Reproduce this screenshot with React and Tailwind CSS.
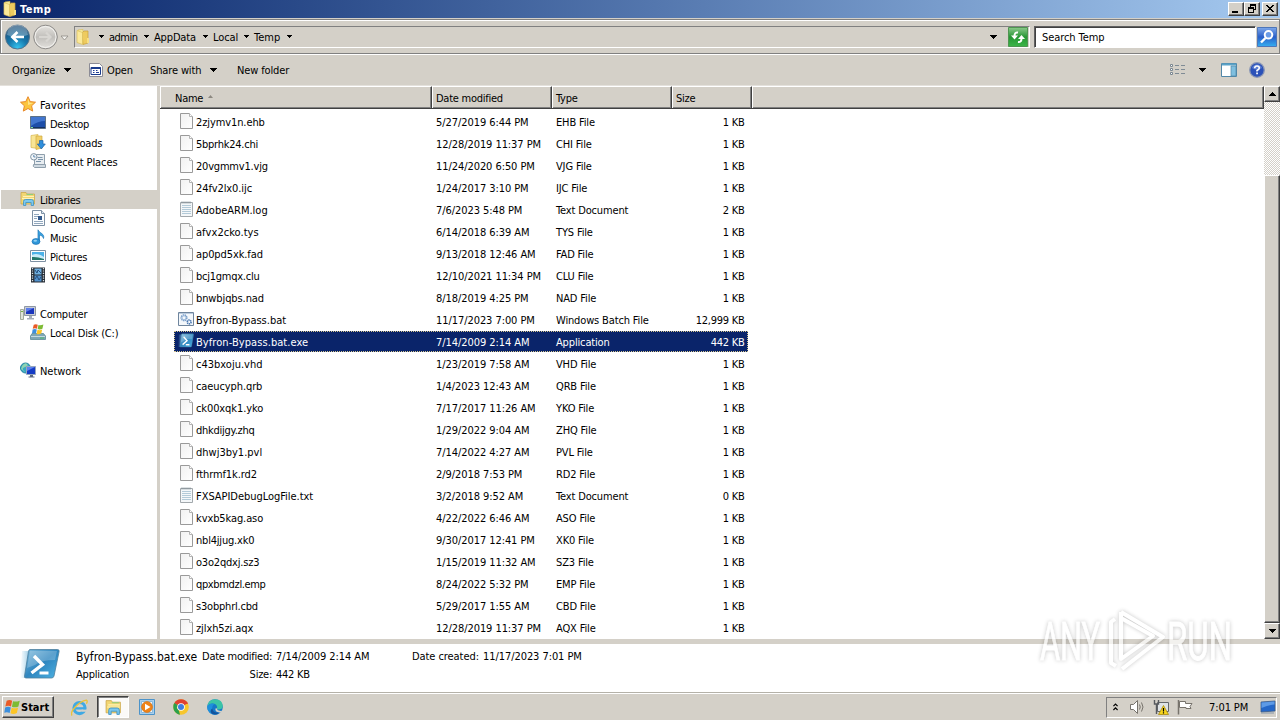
import React from "react";

const files = [
  ["2zjymv1n.ehb", "5/27/2019 6:44 PM", "EHB File", "1 KB"],
  ["5bprhk24.chi", "12/28/2019 11:37 PM", "CHI File", "1 KB"],
  ["20vgmmv1.vjg", "11/24/2020 6:50 PM", "VJG File", "1 KB"],
  ["24fv2lx0.ijc", "1/24/2017 3:10 PM", "IJC File", "1 KB"],
  ["AdobeARM.log", "7/6/2023 5:48 PM", "Text Document", "2 KB", "text"],
  ["afvx2cko.tys", "6/14/2018 6:39 AM", "TYS File", "1 KB"],
  ["ap0pd5xk.fad", "9/13/2018 12:46 AM", "FAD File", "1 KB"],
  ["bcj1gmqx.clu", "12/10/2021 11:34 PM", "CLU File", "1 KB"],
  ["bnwbjqbs.nad", "8/18/2019 4:25 PM", "NAD File", "1 KB"],
  ["Byfron-Bypass.bat", "11/17/2023 7:00 PM", "Windows Batch File", "12,999 KB", "batch"],
  ["Byfron-Bypass.bat.exe", "7/14/2009 2:14 AM", "Application", "442 KB", "shell"],
  ["c43bxoju.vhd", "1/23/2019 7:58 AM", "VHD File", "1 KB"],
  ["caeucyph.qrb", "1/4/2023 12:43 AM", "QRB File", "1 KB"],
  ["ck00xqk1.yko", "7/17/2017 11:26 AM", "YKO File", "1 KB"],
  ["dhkdijgy.zhq", "1/29/2022 9:04 AM", "ZHQ File", "1 KB"],
  ["dhwj3by1.pvl", "7/14/2022 4:27 AM", "PVL File", "1 KB"],
  ["fthrmf1k.rd2", "2/9/2018 7:53 PM", "RD2 File", "1 KB"],
  ["FXSAPIDebugLogFile.txt", "3/2/2018 9:52 AM", "Text Document", "0 KB", "text"],
  ["kvxb5kag.aso", "4/22/2022 6:46 AM", "ASO File", "1 KB"],
  ["nbl4jjug.xk0", "9/30/2017 12:41 PM", "XK0 File", "1 KB"],
  ["o3o2qdxj.sz3", "1/15/2019 11:32 AM", "SZ3 File", "1 KB"],
  ["qpxbmdzl.emp", "8/24/2022 5:32 PM", "EMP File", "1 KB"],
  ["s3obphrl.cbd", "5/29/2017 1:55 AM", "CBD File", "1 KB"],
  ["zjlxh5zi.aqx", "12/28/2019 11:37 PM", "AQX File", "1 KB"],
];

const tracking = {
  "5bprhk24.chi": "tracking-[-0.25px]",
  "20vgmmv1.vjg": "tracking-[-0.2px]",
  "AdobeARM.log": "tracking-[0px]",
  "afvx2cko.tys": "tracking-[0.04px]",
  "bcj1gmqx.clu": "tracking-[-0.25px]",
  "Byfron-Bypass.bat": "tracking-[0px]",
  "Byfron-Bypass.bat.exe": "tracking-[0.07px]",
  "c43bxoju.vhd": "tracking-[0px]",
  "dhkdijgy.zhq": "tracking-[-0.25px]",
  "dhwj3by1.pvl": "tracking-[0px]",
  "FXSAPIDebugLogFile.txt": "tracking-[-0.04px]",
  "nbl4jjug.xk0": "tracking-[-0.2px]",
  "o3o2qdxj.sz3": "tracking-[-0.2px]",
  "qpxbmdzl.emp": "tracking-[-0.35px]",
  "s3obphrl.cbd": "tracking-[-0.2px]",
};

const Svg = ({ children, className = "size-4", box = "0 0 16 16" }) => (
  <svg viewBox={box} className={`shrink-0 ${className}`} fill="none">
    {children}
  </svg>
);

const Down = ({ className = "" }) => (
  <svg viewBox="0 0 7 4" className={`h-1 w-[7px] shrink-0 ${className}`} shapeRendering="crispEdges">
    <path d="M0 0h7v1H0zM1 1h5v1H1zM2 2h3v1H2zM3 3h1v1H3z" fill="#000" />
  </svg>
);
const SmallDown = () => (
  <svg viewBox="0 0 5 3" className="h-[3px] w-[5px] shrink-0" shapeRendering="crispEdges">
    <path d="M0 0h5v1H0zM1 1h3v1H1zM2 2h1v1H2z" fill="#000" />
  </svg>
);

const Page = () => (
  <Svg>
    <defs>
      <linearGradient id="pg" x1="0" y1="0" x2="1" y2="1">
        <stop offset="0" stopColor="#f1f1f1" />
        <stop offset="1" stopColor="#fff" />
      </linearGradient>
    </defs>
    <path d="M2.500 .5h9l3 3v12h-12z" fill="url(#pg)" stroke="#9a9a9a" />
    <path d="M11.500 .5v3h3" fill="#fff" stroke="#b4b4b4" />
  </Svg>
);
const TextPage = () => (
  <Svg>
    <path d="M2.500 1.500h12v14h-12z" fill="#f4f7f9" stroke="#a2a8ac" />
    <path d="M3.500 1.500h10" stroke="#7e8a92" strokeDasharray="1 1" strokeWidth="2" />
    <path d="M4 4.500h9M4 6.500h9M4 8.500h9M4 10.500h9M4 12.500h9" stroke="#b3cad8" />
  </Svg>
);
const Batch = () => (
  <Svg>
    <path d="M.5 1.500h15v13H.5z" fill="#f3f7fb" stroke="#6f859d" />
    <path d="M1 2.500h14" stroke="#b9cadd" />
    <circle cx="6" cy="6.800" r="2.900" stroke="#6f97c6" strokeWidth="1.300" strokeDasharray="1.4 .6" />
    <circle cx="6" cy="6.800" r="2" stroke="#86a9d0" strokeWidth=".8" />
    <circle cx="11.200" cy="11" r="1.900" stroke="#4a77b1" strokeWidth="1.600" strokeDasharray="1.300 .5" />
  </Svg>
);
const Shell = ({ className = "size-4", box = "0 0 40 32" }) => (
  <svg viewBox={box} preserveAspectRatio="none" className={`shrink-0 ${className}`} fill="none">
    <defs>
      <linearGradient id="sh" x1="0" y1="0" x2="1" y2="1">
        <stop offset="0" stopColor="#7fbbdc" />
        <stop offset=".5" stopColor="#2f86bf" />
        <stop offset="1" stopColor="#4fb4e4" />
      </linearGradient>
      <linearGradient id="shf" x1="0" x2="1">
        <stop offset="0" stopColor="#8cc8e6" stopOpacity="0" />
        <stop offset="1" stopColor="#5da9d4" />
      </linearGradient>
    </defs>
    <path d="M2 3h12L8 30H0z" fill="url(#shf)" />
    <path d="M10 1.500h27.500q2 0 1.600 2L34 28q-.5 2-2.500 2H6q-2 0-1.500-2L8.500 3.500q.3-2 1.500-2z" fill="url(#sh)" stroke="#4d7f9d" strokeOpacity=".8" />
    <path d="M10 3h27l-2 9q-14 0-20 5l-8 3z" fill="#fff" opacity=".22" />
    <path d="M14 8l8.500 8.500L11.500 25" stroke="#fff" strokeWidth="3.400" />
    <path d="M19.500 25h9" stroke="#fff" strokeWidth="3" />
  </svg>
);
const Folder = ({ className }) => (
  <Svg className={className}>
    <path d="M3 1l5-.5v14L3 13z" fill="#f8eda2" stroke="#d9bd55" strokeWidth=".7" />
    <path d="M7 4l2-2h4v12l-5 1.500z" fill="#eecb5f" stroke="#c9a23b" strokeWidth=".7" />
    <path d="M2 1.500L7.500 3.500v12L2 13.500z" fill="#fbe99a" stroke="#dcc05c" strokeWidth=".7" />
    <path d="M12 9h2v5h-2z" fill="#f7df85" />
  </Svg>
);
const Star = () => (
  <Svg>
    <path d="M8 .7l2.200 4.900 5.300.6-3.900 3.600 1.100 5.300L8 12.500l-4.700 2.600 1.100-5.300L.5 6.200l5.300-.6z" fill="#fbc53f" stroke="#e8892a" />
    <path d="M8 2.700l1.500 4 4 .3L8 9z" fill="#ffe48a" />
  </Svg>
);
const Desktop = () => (
  <Svg>
    <path d="M.5 1.500h15v12H.5z" fill="#1d4ea9" stroke="#5d7186" />
    <path d="M1 2h14v4Q8 6 1 11z" fill="#4276cf" />
    <path d="M1 12.500h14" stroke="#16305f" />
    <path d="M1 12.500h2" stroke="#7fe0a0" />
  </Svg>
);
const Downloads = () => (
  <Svg>
    <path d="M1 1.500l7-1v14l-7-1z" fill="#f8e595" stroke="#d6b64f" strokeWidth=".7" />
    <path d="M6 2h6v12l-6 1.500z" fill="#f1d069" stroke="#cfa93f" strokeWidth=".7" />
    <path d="M9.500 6.500h3.500V10h2.300l-4 5-4-5h2.200z" fill="#2f8fdc" stroke="#1c63a8" strokeWidth=".7" />
  </Svg>
);
const Recent = () => (
  <Svg>
    <path d="M4.500 1.500h10v10h-10z" fill="#e8edf1" stroke="#8f9fac" />
    <path d="M3.500 11.500h12v3h-11q-2-1-1-3z" fill="#cfd9e1" stroke="#8f9fac" />
    <path d="M7.500 4.500h5M8 6.500h5M6 8.500h5" stroke="#7c95ab" />
    <circle cx="3.800" cy="3.800" r="3.200" fill="#f4f8fb" stroke="#8295a5" />
    <path d="M3.800 2v2h1.700" stroke="#3e6d9c" strokeWidth=".8" />
  </Svg>
);
const Libraries = ({ className }) => (
  <Svg className={className}>
    <path d="M1 1.500h5l1 1.500h7.500v10H1z" fill="#f2d673" stroke="#c9a344" strokeWidth=".7" />
    <path d="M3 5.500h11M2 7.500h12" stroke="#fff3b5" />
    <path d="M6 3h7v1H7z" fill="#8bcf7c" />
    <path d="M3.500 14.500v-4q0-2 2-2h6q2 0 2 2v4h-2.300v-3H5.800v3z" fill="#7cc8ef" stroke="#3b91c4" strokeWidth=".8" />
  </Svg>
);
const Documents = () => (
  <Svg>
    <path d="M2.500 .5h9l3 3v12h-12z" fill="#fbfdff" stroke="#7d90a4" />
    <path d="M11.500 .5v3h3" fill="#dce8f3" stroke="#7d90a4" />
    <path d="M4 4.500h5M4 6.500h4M4 8.500h3M4 11.500h9M4 13.500h9" stroke="#91a7bd" />
    <path d="M8 6h4v4H8z" fill="#31588c" />
  </Svg>
);
const Music = () => (
  <Svg>
    <path d="M8 12V.8C9.500 4.500 15 4.500 13.500 9.500 13 7 11 6.500 9.500 6v6.500z" fill="#3ba2df" stroke="#1f78b9" strokeWidth=".7" />
    <ellipse cx="6" cy="12.500" rx="4" ry="2.900" fill="#2f97da" stroke="#1c72b3" strokeWidth=".7" />
    <ellipse cx="5.300" cy="11.700" rx="1.800" ry="1" fill="#8fd0f4" />
  </Svg>
);
const Pictures = () => (
  <Svg>
    <path d="M.5 2.500h15v11H.5z" fill="#fff" stroke="#7e91a3" />
    <path d="M2 4h12v8H2z" fill="#4db2e8" />
    <path d="M2 7q5-3 12 2v3H2z" fill="#c9ebf8" />
    <path d="M2 9q5-.5 12 2v1H2z" fill="#25786b" />
  </Svg>
);
const Videos = () => (
  <Svg>
    <path d="M1 .5h14v15H1z" fill="#262d35" />
    <path d="M2.500 1v14M13.500 1v14" stroke="#d5dde4" strokeWidth="1.300" strokeDasharray="1.200 1.200" />
    <path d="M4.500 1.500h7v6h-7z" fill="#6fb0e0" />
    <path d="M4.500 8.500h7v6h-7z" fill="#4f90cc" />
    <path d="M5 3l2 3 1-3 3 3M5 12l2-3 2 4 2-3" stroke="#274f7d" />
  </Svg>
);
const Computer = () => (
  <Svg>
    <path d="M.5 4.500h3v10h-3z" fill="#dfe3da" stroke="#a3ab9c" />
    <path d="M1 6.500h2" stroke="#78b04b" />
    <path d="M4.500 1.500h11v9h-11z" fill="#c7ccd6" stroke="#8e97a4" />
    <path d="M6 3h8v6H6z" fill="#1a35bd" />
    <path d="M6 3h8L6 7z" fill="#5c7ceb" />
    <path d="M9 11h3v2h2v1.500H7V13h2z" fill="#a5aebb" />
  </Svg>
);
const Flag = ({ x = 0, y = 0, s = 1 }) => (
  <g transform={`translate(${x} ${y}) scale(${s})`}>
    <path d="M2.300 1.600Q5 .2 7.600 1.500L6.500 7Q4 5.800 1 7z" fill="#ea5b27" />
    <path d="M8.500 1.900Q11 3 15 1.400L13.700 7Q10.500 8.500 7.400 7.300z" fill="#7dbb34" />
    <path d="M.8 8Q3.800 6.800 6.300 8L5.200 13.400Q2.500 12 0 13.200z" fill="#3c8fdd" />
    <path d="M7.200 8.300Q10.300 9.500 13.400 8L12.200 13.300Q9 15 6 13.700z" fill="#fcc526" />
  </g>
);
const Disk = () => (
  <Svg>
    <path d="M2 9.500h11.500l2 2.500v3.500H.5V12z" fill="#7fa6b4" stroke="#5d8a98" strokeWidth=".8" />
    <path d="M1 12.500h14" stroke="#c4dae2" />
    <path d="M10 14h4" stroke="#4fb96b" />
    <Flag x={2} y={-0.5} s={0.76} />
  </Svg>
);
const Network = () => (
  <Svg>
    <circle cx="5.500" cy="6" r="5" fill="#36a7c2" stroke="#2583a0" />
    <path d="M2 4q3-4 5-2t-2 3-1 4-3-2z" fill="#8ed3b0" />
    <path d="M6.500 4.500h9v8h-9z" fill="#153bc5" stroke="#97a5bc" />
    <path d="M7 5h8l-8 4z" fill="#5b80ed" />
    <path d="M10 13h3v1.500h1.500v1h-6v-1H10z" fill="#5d6a80" />
  </Svg>
);

const sidebar = [
  [0, "Favorites", Star, "tracking-[0.12px]"],
  [1, "Desktop", Desktop],
  [1, "Downloads", Downloads],
  [1, "Recent Places", Recent, "tracking-[-0.1px]"],
  null,
  [0, "Libraries", Libraries],
  [1, "Documents", Documents],
  [1, "Music", Music],
  [1, "Pictures", Pictures],
  [1, "Videos", Videos],
  null,
  [0, "Computer", Computer],
  [1, "Local Disk (C:)", Disk, "tracking-[-0.18px]"],
  null,
  [0, "Network", Network, "tracking-[-0.05px]"],
];

const raised =
  "border border-t-white border-l-white border-r-[#404040] border-b-[#404040] bg-[#d4d0c8] shadow-[inset_-1px_-1px_0_#808080]";

const WinButton = ({ children }) => (
  <div className={`flex h-[14px] w-4 items-center justify-center ${raised}`}>
    <svg viewBox="0 0 12 10" className="h-[10px] w-3 shrink-0" fill="none" shapeRendering="crispEdges">
      {children}
    </svg>
  </div>
);

const Crumb = ({ children, className }) => (
  <div className={`flex shrink-0 items-center justify-between ${className}`}>
    <span>{children}</span>
    <SmallDown />
  </div>
);

function TitleBar() {
  return (
    <div className="flex h-[18px] shrink-0 items-center bg-linear-to-r from-[#0a246a] to-[#a6caf0] pl-[2px] pr-[2px]">
      <Folder className="size-4" />
      <span className="ml-[2px] flex-1 text-[11px] font-bold tracking-[0.5px] text-white">Temp</span>
      <WinButton>
        <path d="M2 7h6v2H2z" fill="#000" />
      </WinButton>
      <WinButton>
        <path d="M4 0h6v6H8V5h1V2H5v1H4z" fill="#000" />
        <path d="M2 3h6v6H2zM3 5v3h4V5z" fill="#000" fillRule="evenodd" />
      </WinButton>
      <div className="w-[2px]" />
      <WinButton>
        <path d="M2 1h2v1h1v1h2V2h1V1h2v1H9v1H8v1H7v1h1v1h1v1h1v1H8V7H7V6H5v1H4v1H2V7h1V6h1V5h1V4H4V3H3V2H2z" fill="#000" />
      </WinButton>
    </div>
  );
}

function AddressBar() {
  return (
    <div className="flex h-[37px] shrink-0 flex-col border-b border-white pt-px">
      <div className="flex h-[35px] items-center border border-[#808080] shadow-[inset_1px_1px_0_#fff] pl-[3px] pr-[2px]">
        <svg viewBox="0 0 66 26" className="h-[26px] w-[66px] shrink-0" fill="none">
          <defs>
            <radialGradient id="bk" cx=".5" cy=".95" r=".9">
              <stop offset="0" stopColor="#35c4f0" />
              <stop offset=".45" stopColor="#1778ac" />
              <stop offset="1" stopColor="#1c4e78" />
            </radialGradient>
            <linearGradient id="fw" x2="0" y2="1">
              <stop offset="0" stopColor="#e6e4e0" />
              <stop offset=".5" stopColor="#c1bfbb" />
              <stop offset="1" stopColor="#e3e1dd" />
            </linearGradient>
          </defs>
          <circle cx="13.500" cy="13" r="12" fill="url(#bk)" stroke="#56748c" />
          <path d="M3 11A10.500 10.500 0 0 1 24 11Q13 15 3 11z" fill="#fff" opacity=".3" />
          <path d="M20 13H9M13.500 8l-5.200 5 5.200 5" stroke="#fff" strokeWidth="2.600" />
          <circle cx="41.500" cy="13" r="11.800" fill="url(#fw)" stroke="#8e8c89" />
          <circle cx="41.500" cy="13" r="10.500" stroke="#f4f3f0" />
          <path d="M35 13h11M42 8.500l4.500 4.500-4.500 4.500" stroke="#d8d6d2" strokeWidth="2.200" />
          <path d="M57 12h7l-3.500 4z" fill="#f4f2ee" stroke="#8d8a84" strokeWidth=".8" />
        </svg>
        <div className="ml-[4px] flex h-[22px] w-[956px] items-center border border-t-[#808080] border-l-[#808080] border-b-white border-r-white [&_span]:pt-0">
          <Folder className="size-4" />
          <div className="ml-[8px] flex w-[5px]"><SmallDown /></div>
          <Crumb className="ml-[5px] w-[40px] tracking-[-0.5px]">admin</Crumb>
          <Crumb className="ml-[5px] w-[54px] tracking-[-0.15px]">AppData</Crumb>
          <Crumb className="ml-[5px] w-[36px] tracking-[-0.1px]">Local</Crumb>
          <Crumb className="ml-[5px] w-[38px] tracking-[0px]">Temp</Crumb>
          <div className="flex-1" />
          <Down className="mr-[11px]" />
          <svg viewBox="0 0 20 20" className="mr-px size-5 shrink-0" fill="none">
            <defs>
              <linearGradient id="rf" x2="0" y2="1">
                <stop offset="0" stopColor="#8cc98c" />
                <stop offset=".5" stopColor="#279634" />
                <stop offset="1" stopColor="#3cb548" />
              </linearGradient>
            </defs>
            <path d="M.5 .5h19v19H.5z" fill="url(#rf)" stroke="#4f9551" />
            <path d="M10 5.500Q6.500 5 6.500 9" stroke="#fff" strokeWidth="2" />
            <path d="M3 8.500h7l-3.500 4z" fill="#fff" />
            <path d="M10 15Q13.500 15.500 13.500 11.500" stroke="#fff" strokeWidth="2" />
            <path d="M10 12h7l-3.500-4z" fill="#fff" />
          </svg>
        </div>
        <div className="ml-[4px] flex h-[22px] w-[222px] items-center border border-b-white border-r-white border-t-[#606060] border-l-[#606060] bg-white pl-[7px] shadow-[inset_1px_1px_0_#404040]">
          <span className="tracking-[-0.08px]">Search Temp</span>
        </div>
        <svg viewBox="0 0 20 20" className="ml-[1px] size-5 shrink-0" fill="none">
          <defs>
            <linearGradient id="se" x2="0" y2="1">
              <stop offset="0" stopColor="#7ea8ea" />
              <stop offset=".5" stopColor="#2a5fc9" />
              <stop offset="1" stopColor="#35aef0" />
            </linearGradient>
          </defs>
          <path d="M.5 .5h19v19H.5z" fill="url(#se)" stroke="#4e76b8" />
          <circle cx="11.500" cy="7.800" r="3.800" stroke="#fff" strokeWidth="2" fill="#6a9be6" />
          <path d="M8.500 11L4 15.500" stroke="#fff" strokeWidth="2.400" />
        </svg>
      </div>
    </div>
  );
}

function CommandBar() {
  return (
    <div className="flex h-[31px] shrink-0 items-center border-b border-[#e4e1dc] pl-3 tracking-[-0.13px]">
      <div className="flex w-[59px] items-center justify-between"><span>Organize</span><Down /></div>
      <Svg className="ml-[17px] size-4">
        <path d="M1.500 1.500h10l3 3v10h-13z" fill="#fff" stroke="#8c8c96" />
        <path d="M3 5.500h9.500v7H3z" fill="#fff" stroke="#1a3b8c" />
        <path d="M3 6h9.500" stroke="#1a3b8c" strokeWidth="2" />
        <path d="M5 8.500h1.500M8 8.500h1.500M5 10.500h1.500M8 10.500h3" stroke="#1f3f96" />
      </Svg>
      <span className="ml-[3px] w-[43px]">Open</span>
      <div className="flex w-[67px] items-center justify-between"><span>Share with</span><Down /></div>
      <span className="ml-5">New folder</span>
      <div className="flex-1" />
      <Svg className="size-4">
        <path d="M.5 2.500h2v2h-2zM.5 6.500h2v2h-2zM.5 10.500h2v2h-2z" fill="#fff" stroke="#7b8791" />
        <path d="M5 3.500h4M5 7.500h4M5 11.500h4M11 3.500h4M11 7.500h4M11 11.500h4" stroke="#7f8b95" />
      </Svg>
      <Down className="ml-[13px]" />
      <Svg className="ml-[15px] size-4">
        <path d="M.5 1.500h15v13H.5z" fill="#fff" stroke="#5187a8" />
        <path d="M1 2.500h14" stroke="#5aa3c8" strokeWidth="2" />
        <path d="M10 4h5v10h-5z" fill="#7fbfdf" stroke="#5187a8" strokeWidth=".7" />
      </Svg>
      <Svg className="mr-[15px] ml-[12px] size-4">
        <circle cx="8" cy="8" r="7.300" fill="#2b51b8" stroke="#8b97b5" strokeWidth="1.300" />
        <path d="M3 6A5.300 5.300 0 0 1 13 6Q8 9 3 6z" fill="#7f9ee2" opacity=".6" />
        <path d="M5.700 6.200Q5.800 4 8 4t2.300 2Q10.300 7.300 8 8.500v1" stroke="#fff" strokeWidth="1.600" />
        <path d="M7.200 10.600h1.700v1.700H7.200z" fill="#fff" />
      </Svg>
    </div>
  );
}

function Sidebar() {
  return (
    <div className="flex w-[157px] shrink-0 flex-col bg-white pt-[9px]">
      {sidebar.map((item, i) => {
        if (!item) return <div key={i} className="h-[19px]" />;
        const [level, label, Icon, track = ""] = item;
        return (
          <div
            key={i}
            className={`flex h-[19px] items-center gap-1 ${level ? "pl-[30px]" : label === "Libraries" ? "ml-px bg-[#d4d0c8] pl-[19px]" : "pl-5"}`}
          >
            <div className="pb-px"><Icon className="size-4" /></div>
            <span className={track}>{label}</span>
          </div>
        );
      })}
    </div>
  );
}

const headCell =
  "flex h-[23px] items-center border-t border-b border-r border-t-white border-b-[#404040] border-r-[#404040] bg-[#d4d0c8] shadow-[inset_1px_0_0_#fff,inset_-1px_-1px_0_#808080]";

function FileRow({ file }) {
  const [name, date, type, size, kind] = file;
  const selected = kind === "shell";
  return (
    <div className="h-[22px] pl-[14px]">
      <div
        className={`flex h-[21px] w-[574px] items-center border ${selected ? "border-dotted border-[#d8c890] bg-[#0a246a] text-white" : "border-transparent"}`}
      >
        <div className="flex w-[261px] items-center gap-[2px] pl-[3px]">
          <div className="pb-[2px]">
            {kind === "text" ? <TextPage /> : kind === "batch" ? <Batch /> : kind === "shell" ? <Shell className="h-[15px] w-4" /> : <Page />}
          </div>
          <span className={tracking[name] || "tracking-[-0.1px]"}>{name}</span>
        </div>
        <span className="w-[120px] tracking-[-0.07px]">{date}</span>
        <span className="w-[120px] tracking-[-0.15px]">{type}</span>
        <span className="flex-1 pr-[2.5px] text-right">{size}</span>
      </div>
    </div>
  );
}

function FileList() {
  return (
    <div className="flex flex-1 flex-col bg-white">
      <div className="flex">
        <div className={`${headCell} w-[272px] pl-[15px]`}>
          <span>Name</span>
          <svg viewBox="0 0 5 3" className="mb-[3px] ml-[5px] h-[3px] w-[5px]"><path d="M0 3h5L2.500 0z" fill="#8c8880" /></svg>
        </div>
        <div className={`${headCell} w-[120px] pl-1`}><span>Date modified</span></div>
        <div className={`${headCell} w-[120px] pl-1`}><span>Type</span></div>
        <div className={`${headCell} w-[80px] pl-1`}><span>Size</span></div>
        <div className={`${headCell} flex-1`} />
      </div>
      <div className="pt-[2px]">
        {files.map((f) => <FileRow key={f[0]} file={f} />)}
      </div>
    </div>
  );
}

function ScrollBar() {
  return (
    <div className="flex w-4 shrink-0 flex-col bg-[repeating-conic-gradient(#d4d0c8_0_25%,#ffffff_0_50%)] bg-size-[2px_2px]">
      <div className={`flex h-4 items-center justify-center ${raised}`}>
        <Down className="rotate-180" />
      </div>
      <div className="h-[73px]" />
      <div className={`flex-1 ${raised}`} />
      <div className={`flex h-4 items-center justify-center ${raised}`}>
        <Down />
      </div>
    </div>
  );
}

function Details() {
  return (
    <div className="flex h-[48px] shrink-0 bg-white tracking-[-0.07px]">
      <Shell className="mt-[4px] ml-5 h-[32px] w-[40px]" />
      <div className="ml-4 flex w-[126px] flex-col">
        <span className="mt-[3px] h-[18px] text-[12px] leading-4 tracking-[0.02px] whitespace-nowrap">Byfron-Bypass.bat.exe</span>
        <span className="leading-4 tracking-[-0.2px]">Application</span>
      </div>
      <div className="flex w-[70px] flex-col text-right tracking-[-0.25px]">
        <span className="mt-[3px] h-[18px] leading-4 whitespace-nowrap">Date modified:</span>
        <span className="leading-4">Size:</span>
      </div>
      <div className="ml-[4px] flex w-[136px] flex-col">
        <span className="mt-[3px] h-[18px] leading-4">7/14/2009 2:14 AM</span>
        <span className="leading-4 tracking-[-0.25px]">442 KB</span>
      </div>
      <span className="mt-[3px] w-[67px] leading-4 whitespace-nowrap">Date created:</span>
      <span className="mt-[3px] ml-[4px] leading-4">11/17/2023 7:01 PM</span>
    </div>
  );
}

function TaskBar() {
  return (
    <div className="flex h-[28px] shrink-0 items-center border-t border-[#b4b1a8] bg-[#d4d0c8] pt-px shadow-[inset_0_1px_0_#fff]">
      <div className={`ml-[2px] flex h-[22px] w-[52px] items-center gap-px pl-[1px] ${raised}`}>
        <Svg><Flag x={0.3} y={0.2} s={1.03} /></Svg>
        <span className="text-[11px] font-bold tracking-[0px]">Start</span>
      </div>
      <Svg className="ml-[17px] size-[17px]">
        <circle cx="8" cy="8.500" r="5.200" stroke="#3fa9e4" strokeWidth="3" />
        <path d="M4 8.800h9" stroke="#3fa9e4" strokeWidth="2.200" />
        <path d="M10 11h5" stroke="#d4d0c8" strokeWidth="2" />
        <path d="M1 15.500Q-1 13 4 7.500T14.500 1Q16 1.500 14.500 4.500" stroke="#e9c23a" strokeWidth="1.300" />
      </Svg>
      <div className="ml-[9px] flex h-[22px] w-8 items-center justify-center border border-t-[#404040] border-l-[#404040] border-r-white border-b-white bg-[#fbfaf8] shadow-[inset_1px_1px_0_#808080]">
        <Libraries className="size-[17px]" />
      </div>
      <Svg className="ml-[10px] size-4">
        <path d="M.5 .5h15v15H.5z" fill="#a9cfec" stroke="#4c93c9" />
        <path d="M2.500 2.500h11v11h-11z" fill="#f1f6fa" stroke="#88b8db" />
        <circle cx="8" cy="8" r="5.300" fill="#ef8318" stroke="#e07b1a" />
        <path d="M6 4.800l5.500 3.200L6 11.200z" fill="#fff" />
      </Svg>
      <Svg className="ml-[18px] size-4">
        <circle cx="8" cy="8" r="7.800" fill="#f7c62c" />
        <path d="M8 8L1.200 4.200A7.800 7.800 0 0 1 14.800 4.200z" fill="#df4132" />
        <path d="M8 8H1Q-.5 7 1.300 4.100L6 12l1 3.700A7.800 7.800 0 0 1 1.300 4.100z" fill="#2ca04c" />
        <path d="M8 4.200h6.800" stroke="#df4132" />
        <circle cx="8" cy="8" r="3.800" fill="#fff" />
        <circle cx="8" cy="8" r="3" fill="#3f7de0" />
      </Svg>
      <Svg className="ml-[18px] size-4">
        <circle cx="8" cy="8" r="7.800" fill="#1677c8" />
        <path d="M.4 7Q1.500 .2 8 .2q7.500.3 7.800 6.800-.3 3.500-4.300 3.500-2 0-1.700-1Q11 7 8 5 3.500 3.500.4 7z" fill="#3bc4a6" />
        <path d="M.4 7Q3.500 3.500 8 5 5 6 5.300 9.500 6 13 10.500 15.300 3 17 .4 10z" fill="#1e90dc" />
        <path d="M9.600 9.500Q8 12.500 13.800 12.800q.8-.2 1-.3" stroke="#d4d0c8" strokeWidth="1.800" />
        <path d="M5.300 9.500Q6 14 12 13.700q-3 3-7 1.100Q2 12 5.300 9.500z" fill="#14539c" />
      </Svg>
      <div className="flex-1" />
      <div className="mr-[3px] flex h-[21px] w-[171px] items-center border border-t-[#808080] border-l-[#808080] border-b-white border-r-white">
        <svg viewBox="0 0 5 8" className="ml-[6px] h-2 w-[5px] shrink-0" fill="none" stroke="#000" strokeWidth="1.200">
          <path d="M.4 3.200L2.500 1l2.100 2.200M.4 7L2.500 4.800 4.600 7" />
        </svg>
        <Svg className="ml-[11px] size-4">
          <path d="M1.500 5.500h3l4-4v13l-4-4h-3z" fill="#fff" stroke="#77736c" />
          <path d="M10.500 5.500q1.500 2.500 0 5M12.500 3.500q3 4.500 0 9" stroke="#77736c" />
        </Svg>
        <Svg className="ml-[8px] size-4">
          <path d="M4.500 3.500h11v9h-11z" fill="#dfe3e6" stroke="#64676b" />
          <path d="M1.500 1v4h4V1M3.500 5v10" stroke="#56595e" strokeWidth="1.400" />
          <path d="M10.500 6.500l5 9h-10z" fill="#f7d51d" stroke="#a88a10" strokeWidth=".8" />
          <path d="M10.500 9v3.500M10.500 13.300v1.200" stroke="#000" strokeWidth="1.200" />
        </Svg>
        <Svg className="ml-[8px] size-4">
          <path d="M1.500 1v14.500" stroke="#77736c" strokeWidth="1.500" />
          <path d="M2.500 2.500h6v2h6.500l-2 3 1 2H9v-1H2.500z" fill="#fff" stroke="#77736c" />
        </Svg>
        <span className="ml-[16px] w-[47px] tracking-[-0.1px]">7:01 PM</span>
        <Svg className="ml-[4px] size-4">
          <path d="M1 3l14-1v10L1 13z" fill="#2467c8" stroke="#3d5d88" strokeWidth=".8" />
          <path d="M1.500 3.500l13-1v3Q8 6 1.500 9z" fill="#5d9ae6" />
          <path d="M1 14h13" stroke="#8696a8" />
        </Svg>
      </div>
    </div>
  );
}

const Watermark = () => (
  <svg
    viewBox="0 0 216 76"
    className="absolute top-[602px] left-[1030px] h-[76px] w-[216px] overflow-visible drop-shadow-[0_0_2px_rgba(0,0,0,0.32)]"
    fill="none"
    opacity=".7"
  >
    <g fontFamily="Liberation Sans Narrow, Roboto, sans-serif" fontSize="53" fill="#fff" stroke="#fff" strokeWidth=".8">
      <text x="10" y="58" textLength="60" lengthAdjust="spacingAndGlyphs">ANY</text>
      <text x="137" y="58" textLength="65" lengthAdjust="spacingAndGlyphs">RUN</text>
    </g>
    <path d="M91 10v47l32-23-32-18M91 10l42 25-41 32M85 17l-4 3v41l5 3" stroke="#fff" strokeWidth="4" strokeLinejoin="round" />
  </svg>
);

export default function App() {
  return (
    <div className="relative flex h-[720px] w-[1280px] flex-col overflow-hidden bg-[#d4d0c8] font-['DejaVu_Sans_Condensed','DejaVu_Sans',sans-serif] text-[11px] leading-[14px] tracking-[-0.25px] text-black [&_span]:pt-[2px]">
      <TitleBar />
      <AddressBar />
      <CommandBar />
      <div className="flex h-[553px] shrink-0">
        <Sidebar />
        <div className="w-[3px] shrink-0 bg-[#d4d0c8]" />
        <FileList />
        <ScrollBar />
      </div>
      <div className="h-[5px] shrink-0 bg-[#d4d0c8]" />
      <Details />
      <TaskBar />
      <Watermark />
    </div>
  );
}
